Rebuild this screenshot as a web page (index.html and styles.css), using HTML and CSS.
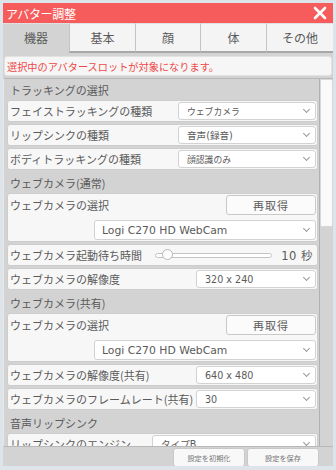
FILE: index.html
```html
<!DOCTYPE html>
<html lang="ja">
<head>
    <meta charset="UTF-8">
    <title>アバター調整</title>
    <link rel="stylesheet" href="styles.css">
</head>
<body>
    <div class="window">
        <div class="titlebar">
            <span class="title">アバター調整</span>
            <svg class="close" width="14" height="14" viewBox="0 0 14 14">
                <path d="M2 2 L12 12 M12 2 L2 12" stroke="#fff" stroke-width="2.6" stroke-linecap="round"/>
            </svg>
        </div>

        <div class="tabs">
            <div class="tab active">機器</div>
            <div class="tab">基本</div>
            <div class="tab">顔</div>
            <div class="tab">体</div>
            <div class="tab">その他</div>
        </div>

        <div class="notice">選択中のアバタースロットが対象になります。</div>

        <div class="panel">
            <div class="scroll-content">
                <div class="section">トラッキングの選択</div>
                <div class="row">
                    <span class="label">フェイストラッキングの種類</span>
                    <div class="select small w138"><span>ウェブカメラ</span><i class="chev"></i></div>
                </div>
                <div class="row">
                    <span class="label">リップシンクの種類</span>
                    <div class="select w138"><span>音声(録音)</span><i class="chev"></i></div>
                </div>
                <div class="row">
                    <span class="label">ボディトラッキングの種類</span>
                    <div class="select small w138"><span>顔認識のみ</span><i class="chev"></i></div>
                </div>

                <div class="section">ウェブカメラ(通常)</div>
                <div class="block">
                    <div class="block-top">
                        <span class="label">ウェブカメラの選択</span>
                        <div class="button">再取得</div>
                    </div>
                    <div class="select wide"><span>Logi C270 HD WebCam</span><i class="chev"></i></div>
                </div>
                <div class="row">
                    <span class="label">ウェブカメラ起動待ち時間</span>
                    <div class="slider">
                        <div class="track"><div class="thumb"></div></div>
                        <span class="value">10 秒</span>
                    </div>
                </div>
                <div class="row">
                    <span class="label">ウェブカメラの解像度</span>
                    <div class="select w120"><span>320 x 240</span><i class="chev"></i></div>
                </div>

                <div class="section">ウェブカメラ(共有)</div>
                <div class="block">
                    <div class="block-top">
                        <span class="label">ウェブカメラの選択</span>
                        <div class="button">再取得</div>
                    </div>
                    <div class="select wide"><span>Logi C270 HD WebCam</span><i class="chev"></i></div>
                </div>
                <div class="row">
                    <span class="label">ウェブカメラの解像度(共有)</span>
                    <div class="select w120"><span>640 x 480</span><i class="chev"></i></div>
                </div>
                <div class="row">
                    <span class="label">ウェブカメラのフレームレート(共有)</span>
                    <div class="select w120"><span>30</span><i class="chev"></i></div>
                </div>

                <div class="section">音声リップシンク</div>
                <div class="row">
                    <span class="label">リップシンクのエンジン</span>
                    <div class="select w164"><span>タイプB</span><i class="chev"></i></div>
                </div>
            </div>
            <div class="scrollbar"><div class="scroll-thumb"></div></div>
        </div>

        <div class="footer">
            <div class="foot-button">設定を初期化</div>
            <div class="foot-button">設定を保存</div>
        </div>
    </div>
</body>
</html>
```

FILE: styles.css
```css
body {
    margin: 0;
    padding: 3px;
    background-color: #dde4ea;
    font-family: "Noto Sans CJK JP", "Noto Sans", sans-serif;
    color: #5a5a5a;
}

.window {
    width: 330px;
    height: 463px;
    background-color: #d3d3d3;
    display: flex;
    flex-direction: column;
    overflow: hidden;
    box-sizing: border-box;
}

.titlebar {
    height: 20px;
    background-color: #f65c5c;
    color: #fff;
    display: flex;
    align-items: center;
    justify-content: space-between;
    padding: 0 6px 0 3px;
    flex-shrink: 0;
}

.title {
    font-size: 12px;
    letter-spacing: -0.3px;
}

.tabs {
    display: grid;
    grid-template-columns: 66px 66px 65px 66px 67px;
    height: 30px;
    flex-shrink: 0;
}

.tab {
    display: flex;
    align-items: center;
    justify-content: center;
    font-size: 12px;
    color: #5a5a5a;
    background-color: #f4f4f4;
    border-left: 1px solid #c4c4c4;
    border-top: 1px solid #e0e0e0;
    border-bottom: 2px solid #a8a8a8;
    box-sizing: border-box;
}

.tab.active {
    background-color: #d3d3d3;
    border-bottom-color: #d3d3d3;
    border-left: none;
}

.notice {
    margin: 3px 1px 0 1px;
    height: 20px;
    background-color: #f6f6f6;
    border: 1px solid #e2e2e2;
    border-radius: 3px;
    color: #f04848;
    font-size: 10.2px;
    display: flex;
    align-items: center;
    padding-left: 2px;
    box-sizing: border-box;
    flex-shrink: 0;
}

.panel {
    margin-top: 2px;
    height: 367px;
    display: flex;
    border-top: 1px solid #b8b8b8;
    border-left: 1px solid #e8e8e8;
    border-bottom: 1px solid #b8b8b8;
    overflow: hidden;
    flex-shrink: 0;
}

.scroll-content {
    flex: 1;
    padding: 0 1px 0 3px;
    display: flex;
    flex-direction: column;
    gap: 2px;
}

.section {
    font-size: 11px;
    height: 22px;
    padding: 3px 0 0 3px;
    box-sizing: border-box;
    display: flex;
    align-items: center;
}

.row, .block {
    background-color: #f7f7f7;
    border: 1px solid #cdcdcd;
    border-radius: 3px;
    box-sizing: border-box;
    flex-shrink: 0;
}

.row {
    height: 22px;
    display: flex;
    align-items: center;
    justify-content: space-between;
    padding: 0 1px 0 2px;
}

.label {
    font-size: 11px;
    white-space: nowrap;
}

.select {
    height: 18px;
    background-color: #fff;
    border: 1px solid #d2d2d2;
    border-radius: 3px;
    display: flex;
    align-items: center;
    justify-content: space-between;
    padding: 0 6px 0 8px;
    box-sizing: border-box;
    font-family: "DejaVu Sans", "Noto Sans CJK JP", sans-serif;
    font-size: 9.6px;
    color: #5a5a5a;
}

.select.small {
    font-size: 8.8px;
}

.w138 { width: 138px; }
.w120 { width: 120px; }
.w164 { width: 164px; }

.chev {
    width: 4px;
    height: 4px;
    border-right: 1px solid #999;
    border-bottom: 1px solid #999;
    transform: rotate(45deg);
    margin-top: -3px;
}

.block {
    height: 49px;
    padding: 1px 1px 1px 2px;
    display: flex;
    flex-direction: column;
    justify-content: space-between;
}

.block-top {
    display: flex;
    align-items: center;
    justify-content: space-between;
}

.button {
    width: 90px;
    height: 20px;
    background-color: #fbfbfb;
    border: 1px solid #c8c8c8;
    border-radius: 3px;
    display: flex;
    align-items: center;
    justify-content: center;
    font-size: 11px;
    letter-spacing: 1px;
    box-sizing: border-box;
}

.select.wide {
    width: 222px;
    height: 20px;
    align-self: flex-end;
    font-size: 10.8px;
    padding-left: 7px;
}

.slider {
    display: flex;
    align-items: center;
    gap: 9px;
    padding-right: 3px;
}

.track {
    width: 117px;
    height: 5px;
    border: 1px solid #c4c4c4;
    border-radius: 3px;
    background-color: #fff;
    position: relative;
    box-sizing: border-box;
}

.thumb {
    position: absolute;
    left: 6px;
    top: -5px;
    width: 11px;
    height: 11px;
    border: 1px solid #b8b8b8;
    border-radius: 50%;
    background-color: #fff;
    box-sizing: border-box;
}

.value {
    font-family: "DejaVu Sans", "Noto Sans CJK JP", sans-serif;
    font-size: 11.5px;
    letter-spacing: 0.5px;
}

.scrollbar {
    width: 13px;
    border-left: 1px solid #b0b0b0;
    flex-shrink: 0;
}

.scroll-thumb {
    height: 148px;
    background-color: #fafafa;
    border: 1px solid #d8d8d8;
    border-radius: 2px;
    box-sizing: border-box;
}

.footer {
    flex: 1;
    display: flex;
    justify-content: flex-end;
    align-items: flex-start;
    gap: 2px;
    padding: 1px 14px 0 0;
}

.foot-button {
    width: 72px;
    height: 19px;
    background-color: #f8f8f8;
    border: 1px solid #c8c8c8;
    border-radius: 3px;
    display: flex;
    align-items: center;
    justify-content: center;
    font-size: 7.2px;
    color: #777;
    box-sizing: border-box;
}
```
